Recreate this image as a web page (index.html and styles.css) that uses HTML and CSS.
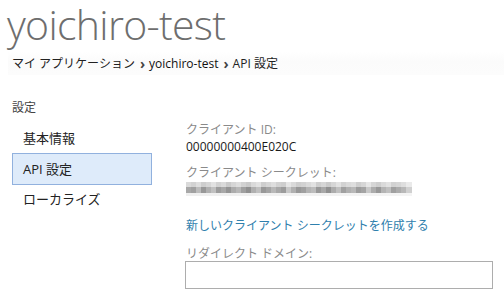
FILE: index.html
```html
<!DOCTYPE html>
<html lang="ja">
<head>
<meta charset="utf-8">
<link rel="stylesheet" href="styles.css">
</head>
<body>
<div class="page">
  <h1 class="title">yoichiro-test</h1>
  <div class="crumbs">
    <span>マイ アプリケーション</span><span class="sep">›</span><span class="crumb-strong">yoichiro-test</span><span class="sep">›</span><span>API 設定</span>
  </div>
  <div class="main">
    <nav class="side">
      <div class="side-head">設定</div>
      <div class="side-item">基本情報</div>
      <div class="side-item active">API 設定</div>
      <div class="side-item last">ローカライズ</div>
    </nav>
    <section class="content">
      <div class="field">
        <div class="label">クライアント ID:</div>
        <div class="value">00000000400E020C</div>
      </div>
      <div class="field">
        <div class="label">クライアント シークレット:</div>
        <div class="secret"></div>
      </div>
      <a class="link" href="#">新しいクライアント シークレットを作成する</a>
      <div class="field">
        <div class="label">リダイレクト ドメイン:</div>
        <input class="input" type="text">
      </div>
    </section>
  </div>
</div>
</body>
</html>
```
FILE: styles.css
```css
html, body {
  margin: 0;
  padding: 0;
  background: #fff;
}
body {
  font-family: "Open Sans", "Noto Sans CJK JP", sans-serif;
  color: #222;
  overflow: hidden;
}
.page {
  width: 504px;
  height: 305px;
}
.title {
  margin: 0 0 4px;
  padding: 0 0 0 7px;
  font-family: "Open Sans", sans-serif;
  font-weight: 300;
  font-size: 41px;
  line-height: 48px;
  color: #6e6e6e;
  letter-spacing: -0.7px;
}
.crumbs {
  margin-left: 8px;
  padding: 0 0 0 4px;
  height: 23px;
  line-height: 22px;
  font-size: 12px;
  color: #222;
  background: linear-gradient(to bottom, #fff 0%, #fbfbfb 40%, #fcfcfc 100%);
  display: flex;
  align-items: center;
}
.crumb-strong {
  color: #111;
}
.sep {
  font-weight: 700;
  font-size: 14px;
  margin: 0 4px 0 5px;
  color: #444;
}
.main {
  display: flex;
  padding: 24px 0 0 12px;
}
.side {
  width: 140px;
  flex: none;
}
.side-head {
  font-size: 12px;
  line-height: 18px;
  color: #444;
  margin-bottom: 6px;
}
.side-item {
  font-size: 13px;
  height: 30px;
  line-height: 28px;
  padding-left: 10px;
  color: #222;
  border: 1px solid transparent;
  box-sizing: border-box;
}
.side-item.active {
  height: 32px;
  line-height: 30px;
  background: #deebfa;
  border-color: #91b1de;
}
.side-item.last {
  margin-top: -1px;
}
.content {
  margin-left: 34px;
  padding-top: 22px;
  flex: 1;
}
.field {
  display: flex;
  flex-direction: column;
}
.label {
  font-size: 12px;
  line-height: 17px;
  color: #8a8a8a;
}
.value {
  font-size: 12px;
  line-height: 17px;
  color: #1a1a1a;
  margin-bottom: 9px;
}
.secret {
  width: 226px;
  height: 15px;
  margin-top: 1px;
  margin-bottom: 20px;
  background:
    linear-gradient(to right,
      #a8a8a8 0 5px, #a0a0a0 5px 10px, #bcbcbc 10px 15px, #989898 15px 20px, #b0b0b0 20px 25px,
      #c0c0c0 25px 30px, #9c9c9c 30px 35px, #a8a8a8 35px 40px, #949494 40px 45px, #acacac 45px 50px,
      #b8b8b8 50px 55px, #a0a0a0 55px 60px, #909090 60px 65px, #b0b0b0 65px 70px, #c0c0c0 70px 75px,
      #989898 75px 80px, #a4a4a4 80px 85px, #b8b8b8 85px 90px, #a8a8a8 90px 95px, #9c9c9c 95px 100px,
      #c8c8c8 100px 105px, #b0b0b0 105px 110px, #989898 110px 115px, #a0a0a0 115px 120px, #b4b4b4 120px 125px,
      #bcbcbc 125px 130px, #989898 130px 135px, #a8a8a8 135px 140px, #909090 140px 145px, #acacac 145px 150px,
      #c0c0c0 150px 155px, #a0a0a0 155px 160px, #b0b0b0 160px 165px, #b8b8b8 165px 170px, #9c9c9c 170px 175px,
      #a4a4a4 175px 180px, #c8c8c8 180px 185px, #acacac 185px 190px, #989898 190px 195px, #b4b4b4 195px 200px,
      #c0c0c0 200px 205px, #a0a0a0 205px 210px, #acacac 210px 215px, #b8b8b8 215px 220px, #d0d0d0 220px 226px)
      0 5px / 226px 6px no-repeat,
    linear-gradient(to right,
      #dadada 0 5px, #d2d2d2 5px 10px, #dedede 10px 15px, #cecece 15px 20px, #d6d6d6 20px 25px,
      #e2e2e2 25px 30px, #d2d2d2 30px 35px, #dadada 35px 40px, #cacaca 40px 45px, #d6d6d6 45px 50px,
      #dedede 50px 55px, #d2d2d2 55px 60px, #cacaca 60px 65px, #dadada 65px 70px, #e2e2e2 70px 75px,
      #cecece 75px 80px, #d6d6d6 80px 85px, #dedede 85px 90px, #d2d2d2 90px 95px, #cecece 95px 100px,
      #e6e6e6 100px 105px, #dadada 105px 110px, #cecece 110px 115px, #d2d2d2 115px 120px, #dadada 120px 125px,
      #e2e2e2 125px 130px, #cecece 130px 135px, #d6d6d6 135px 140px, #cacaca 140px 145px, #d6d6d6 145px 150px,
      #e2e2e2 150px 155px, #d2d2d2 155px 160px, #dadada 160px 165px, #dedede 165px 170px, #cecece 170px 175px,
      #d6d6d6 175px 180px, #e6e6e6 180px 185px, #d6d6d6 185px 190px, #cecece 190px 195px, #dadada 195px 200px,
      #e2e2e2 200px 205px, #d2d2d2 205px 210px, #d6d6d6 210px 215px, #dedede 215px 220px, #eaeaea 220px 226px)
      0 0 / 226px 5px no-repeat,
    linear-gradient(to right, #efefef, #f4f4f4) 0 11px / 226px 3px no-repeat;
}
.link {
  display: block;
  font-size: 12px;
  line-height: 17px;
  color: #2f80ad;
  text-decoration: none;
  margin-bottom: 11px;
}
.input {
  display: block;
  box-sizing: border-box;
  width: 308px;
  height: 28px;
  margin: -1px 0 0 -1px;
  border: 1px solid #adadad;
  padding: 0;
  background: #fff;
  outline: none;
}
```
